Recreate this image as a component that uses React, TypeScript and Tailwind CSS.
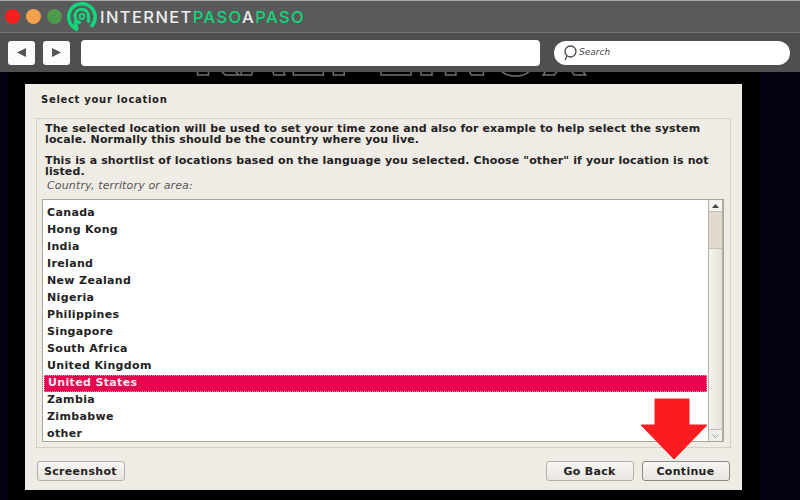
const countries = [
  "Canada",
  "Hong Kong",
  "India",
  "Ireland",
  "New Zealand",
  "Nigeria",
  "Philippines",
  "Singapore",
  "South Africa",
  "United Kingdom",
  "United States",
  "Zambia",
  "Zimbabwe",
  "other",
];

function Logo() {
  return (
    <svg width="30" height="30" viewBox="0 0 30 30" fill="none" className="shrink-0">
      <path d="M9.5 27 A13.2 13.2 0 1 1 25 23.5" stroke="#12d67c" strokeWidth="3.6" strokeLinecap="round" />
      <path d="M9.5 27 L8.5 20" stroke="#12d67c" strokeWidth="3.6" strokeLinecap="round" />
      <path d="M12.5 20.5 A6.8 6.8 0 1 1 21.5 14 L21.5 19.5" stroke="#12d67c" strokeWidth="3.2" strokeLinecap="round" />
      <circle cx="15" cy="14.5" r="2.4" stroke="#12d67c" strokeWidth="2" />
    </svg>
  );
}

function NavButton({ dir }: { dir: "left" | "right" }) {
  return (
    <div className="flex h-[24px] w-[27px] items-center justify-center rounded-[3px] bg-[#fbfbfb]">
      <svg width="11" height="11" viewBox="0 0 11 11">
        <path d={dir === "left" ? "M1 5.5 L10 1 L10 10 Z" : "M10 5.5 L1 1 L1 10 Z"} fill="#555" />
      </svg>
    </div>
  );
}

function ActionButton({ label, strong }: { label: string; strong?: boolean }) {
  return (
    <button
      type="button"
      className={`h-[20px] w-[88px] rounded-[3px] border bg-gradient-to-b from-[#f8f6f3] to-[#e9e6e1] pr-[1px] text-[11px] font-bold leading-none tracking-[0.3px] text-[#222] ${
        strong ? "border-[#8c8a85]" : "border-[#b5b1aa]"
      }`}
    >
      {label}
    </button>
  );
}

export default function App() {
  return (
    <div
      className="relative flex h-[500px] w-[800px] flex-col overflow-hidden bg-black"
      style={{ fontFamily: '"DejaVu Sans", sans-serif' }}
    >
      {/* browser chrome */}
      <header className="relative z-10 border-t border-[#a8a8a8] bg-[#5a5a5a]">
        <div className="flex h-[32px] items-center border-b border-[#777] pl-[5px]">
          <div className="flex items-center gap-[6px]">
            <span className="h-[15px] w-[15px] rounded-full bg-[#f5201e]" />
            <span className="h-[15px] w-[15px] rounded-full bg-[#f3a04c]" />
            <span className="h-[15px] w-[15px] rounded-full bg-[#4c9a4a]" />
          </div>
          <div className="ml-[5px] mt-[1px]">
            <Logo />
          </div>
          <div
            className="ml-[3px] mt-[2px] text-[16.5px] font-medium leading-none tracking-[1.4px]"
            style={{ fontFamily: "Inter, sans-serif" }}
          >
            <span className="text-[#eeeeee]">INTERNET</span>
            <span className="text-[#12d67c]">PASO</span>
            <span className="text-[#eeeeee]">A</span>
            <span className="text-[#12d67c]">PASO</span>
          </div>
        </div>
        <div className="flex h-[39px] items-center bg-[#4f4f4f] pl-[8px]">
          <div className="flex gap-[8px]">
            <NavButton dir="left" />
            <NavButton dir="right" />
          </div>
          <div className="ml-[11px] h-[26px] w-[459px] rounded-[4px] bg-white" />
          <div className="ml-[14px] flex h-[24px] w-[236px] items-center rounded-full bg-white pl-[9px]">
            <svg width="14" height="16" viewBox="0 0 14 16" fill="none">
              <circle cx="7.5" cy="6.5" r="5.5" stroke="#444" strokeWidth="1.3" />
              <path d="M4 11 L2 15" stroke="#444" strokeWidth="1.3" />
            </svg>
            <span className="ml-[2px] text-[9px] italic text-[#444]">Search</span>
          </div>
        </div>
      </header>

      {/* installer screen */}
      <main className="relative flex flex-1 flex-col bg-[linear-gradient(90deg,#03030f_1%,#000_1%,#000_95%,#03030f_95%)]">
        <div className="flex h-[12px] justify-center overflow-hidden pr-[18px]">
          <div className="-mt-[46px] whitespace-nowrap text-[58px] font-bold leading-none tracking-[3px] text-transparent [-webkit-text-stroke:1.5px_#6f6f6f]">
            KALI LINUX
          </div>
        </div>
        <section className="ml-[25px] flex h-[406px] w-[717px] flex-col bg-[#efebe5] px-[11px] pt-[9px] text-[#222]">
          <h1 className="h-[14px] pl-[5px] text-[10px] font-bold leading-[14px] tracking-[0.7px]">
            Select your location
          </h1>
          <div className="mt-[11px] flex h-[330px] w-[695px] flex-col border border-[#d4d0c8] pl-[5px] pr-[6px] pt-[4px]">
            <p className="pl-[3px] text-[11px] font-bold leading-[11px] tracking-[0.13px]">
              The selected location will be used to set your time zone and also for example to help select the system
              locale. Normally this should be the country where you live.
            </p>
            <p className="mt-[10px] pl-[3px] text-[11px] font-bold leading-[11px] tracking-[0.13px]">
              This is a shortlist of locations based on the language you selected. Choose "other" if your location is not
              listed.
            </p>
            <p className="mt-[2px] h-[14px] pl-[5px] text-[11px] italic leading-[14px] tracking-[0.15px] text-[#555]">
              Country, territory or area:
            </p>
            <div className="mt-[6px] flex h-[243px] border border-[#a9a49b] bg-white">
              <ul className="flex-1 px-[1px] pt-[5px]">
                {countries.map((name) => (
                  <li
                    key={name}
                    className={`flex h-[17px] items-center pl-[3px] text-[11px] font-bold tracking-[0.35px] ${
                      name === "United States"
                        ? "border border-dotted border-[#ff8fb0] bg-[#e8054f] pl-[2px] text-[#f5e6ea]"
                        : "text-[#222]"
                    }`}
                  >
                    {name}
                  </li>
                ))}
              </ul>
              <div className="flex w-[15px] flex-col border-x border-[#b5b0a8] bg-[#ddd8d0]">
                <div className="flex h-[12px] items-center justify-center border-b border-[#c4bfb6] bg-[#f5f3ef]">
                  <svg width="7" height="4" viewBox="0 0 7 4">
                    <path d="M0 4 L3.5 0 L7 4 Z" fill="#444" />
                  </svg>
                </div>
                <div className="h-[36px] bg-[#e2d9cd]" />
                <div className="flex-1 border-t border-[#c4bfb6] bg-gradient-to-r from-[#f6f4f0] to-[#e4e0d9]" />
                <div className="flex h-[12px] items-center justify-center border-t border-[#c4bfb6] bg-[#f0eeea]">
                  <svg width="7" height="4" viewBox="0 0 7 4" fill="none">
                    <path d="M0.5 0.5 L3.5 3.5 L6.5 0.5" stroke="#999" />
                  </svg>
                </div>
              </div>
            </div>
          </div>
          <div className="mt-[13px] flex w-[694px] pl-[1px]">
            <ActionButton label="Screenshot" />
            <div className="ml-auto flex gap-[8px]">
              <ActionButton label="Go Back" />
              <ActionButton label="Continue" strong />
            </div>
          </div>
        </section>
      </main>

      {/* red pointer over the Continue button */}
      <svg width="68" height="62" viewBox="0 0 68 62" className="absolute left-[640px] top-[398px]">
        <path d="M15 1 L49 1 L49 27 L67 27 L34 61 L1 27 L15 27 Z" fill="#fb1c22" stroke="#fb1c22" strokeLinejoin="round" />
      </svg>
    </div>
  );
}
